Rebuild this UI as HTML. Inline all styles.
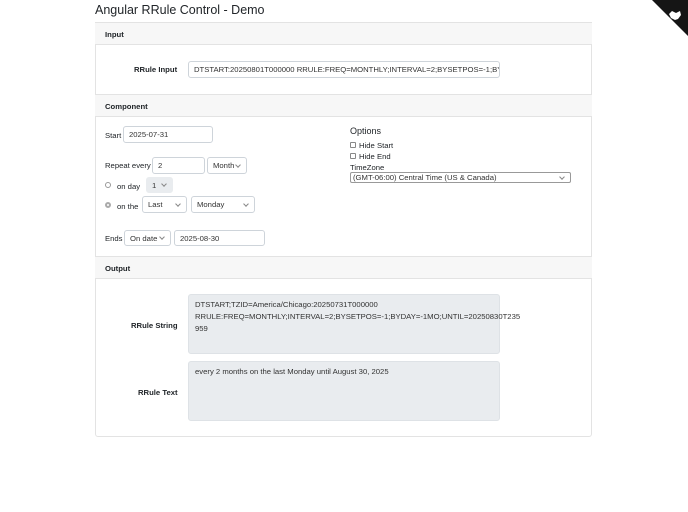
<!DOCTYPE html><html><head><style>
*{box-sizing:border-box;margin:0;padding:0}
body{width:688px;height:512px;background:#fff;font-family:"Liberation Sans",sans-serif;color:#212529;position:relative;overflow:hidden;font-size:7.7px}
.a{position:absolute;white-space:nowrap}
.f{position:absolute;border:1px solid #ced4da;border-radius:3px;background:#fff;padding-left:5px;display:flex;align-items:center;font-size:7.7px;color:#333;white-space:nowrap;overflow:hidden}
.sel::after{content:"";position:absolute;right:6px;top:50%;width:3px;height:3px;margin-top:-3px;border-right:1px solid #888;border-bottom:1px solid #888;transform:rotate(45deg)}
.hd{position:absolute;left:95px;width:497px;height:23px;background:#f7f7f7;border-top:1px solid #e3e3e3;border-bottom:1px solid #e3e3e3;font-weight:bold;padding:7px 0 0 10px;font-size:7.7px}
.b{font-weight:bold}
.ta{position:absolute;background:#e9ecef;border:1px solid #dee2e6;border-radius:3px;padding:4px 6px;font-size:7.7px;line-height:12px;color:#333;white-space:nowrap}
</style></head><body>
<div class="a" style="left:95px;top:3px;font-size:12.5px">Angular RRule Control - Demo</div>
<svg class="a" style="left:648px;top:0" width="40" height="36"><polygon points="4,0 40,0 40,36" fill="#151515"/><path d="M21,14 l3,-3 l4,2 l4,-2 l1,4 l-3,4 l-3,1 l-4,-2z" fill="#fff"/></svg>
<div class="a" style="left:95px;top:22px;width:497px;height:415px;border:1px solid #e3e3e3;border-radius:3px"></div>
<div class="hd" style="top:22px">Input</div>
<div class="a b" style="left:134px;top:65px">RRule Input</div>
<div class="f" style="left:188px;top:61px;width:312px;height:17px">DTSTART:20250801T000000 RRULE:FREQ=MONTHLY;INTERVAL=2;BYSETPOS=-1;BYDAY=</div>
<div class="hd" style="top:94px">Component</div>
<div class="a" style="left:105px;top:131px">Start</div>
<div class="f" style="left:123px;top:126px;width:90px;height:17px">2025-07-31</div>
<div class="a" style="left:105px;top:161px">Repeat every</div>
<div class="f" style="left:152px;top:157px;width:53px;height:17px">2</div>
<div class="f sel" style="left:207px;top:157px;width:40px;height:17px">Month</div>
<div class="a" style="left:105px;top:182px;width:6px;height:6px;border:1px solid #999;border-radius:50%"></div>
<div class="a" style="left:117px;top:182px">on day</div>
<div class="f sel" style="left:146px;top:177px;width:27px;height:16px;background:#e9ecef;border-color:#e9ecef">1</div>
<div class="a" style="left:105px;top:202px;width:6px;height:6px;border:2px solid #aaa;border-radius:50%"></div>
<div class="a" style="left:117px;top:202px">on the</div>
<div class="f sel" style="left:142px;top:196px;width:45px;height:17px">Last</div>
<div class="f sel" style="left:191px;top:196px;width:64px;height:17px">Monday</div>
<div class="a" style="left:105px;top:234px">Ends</div>
<div class="f sel" style="left:124px;top:230px;width:47px;height:16px">On date</div>
<div class="f" style="left:174px;top:230px;width:91px;height:16px">2025-08-30</div>
<div class="a" style="left:350px;top:126px;font-size:9px">Options</div>
<div class="a" style="left:350px;top:142px;width:6px;height:6px;border:1px solid #888;border-radius:1px"></div>
<div class="a" style="left:359px;top:141px">Hide Start</div>
<div class="a" style="left:350px;top:153px;width:6px;height:6px;border:1px solid #888;border-radius:1px"></div>
<div class="a" style="left:359px;top:152px">Hide End</div>
<div class="a" style="left:350px;top:163px">TimeZone</div>
<div class="f sel" style="left:350px;top:172px;width:221px;height:11px;border-color:#999;border-radius:2px;padding-left:2px">(GMT-06:00) Central Time (US &amp; Canada)</div>
<div class="hd" style="top:256px">Output</div>
<div class="a b" style="left:131px;top:321px">RRule String</div>
<div class="ta" style="left:188px;top:294px;width:312px;height:60px">DTSTART;TZID=America/Chicago:20250731T000000<br>RRULE:FREQ=MONTHLY;INTERVAL=2;BYSETPOS=-1;BYDAY=-1MO;UNTIL=20250830T235<br>959</div>
<div class="a b" style="left:138px;top:388px">RRule Text</div>
<div class="ta" style="left:188px;top:361px;width:312px;height:60px">every 2 months on the last Monday until August 30, 2025</div>
</body></html>
